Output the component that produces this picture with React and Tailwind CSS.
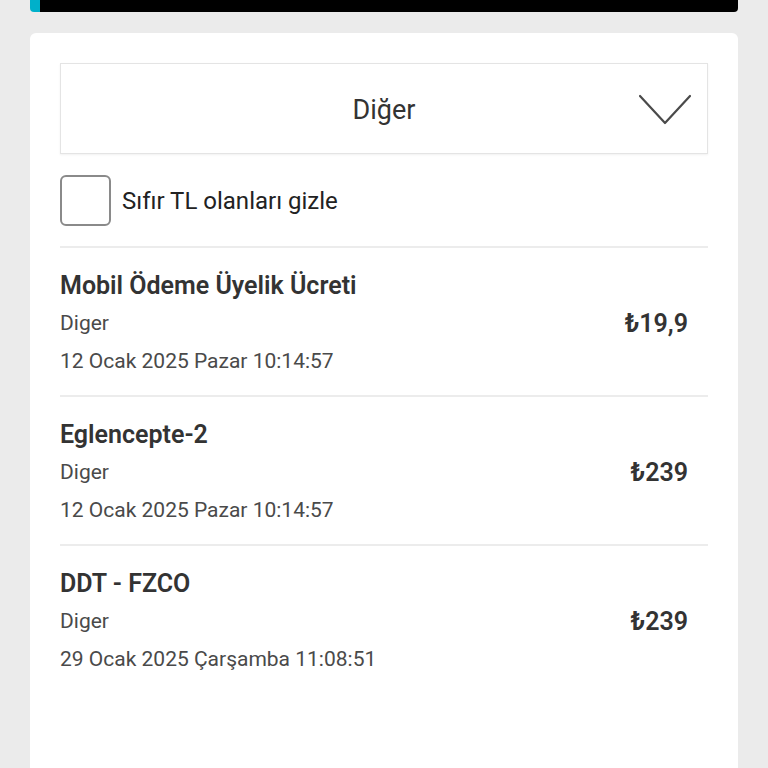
import React from 'react';

const items = [
  { title: 'Mobil Ödeme Üyelik Ücreti', category: 'Diger', date: '12 Ocak 2025 Pazar 10:14:57', amount: '19,9' },
  { title: 'Eglencepte-2', category: 'Diger', date: '12 Ocak 2025 Pazar 10:14:57', amount: '239' },
  { title: 'DDT - FZCO', category: 'Diger', date: '29 Ocak 2025 Çarşamba 11:08:51', amount: '239' },
];

const Chevron = () => (
  <svg width="54" height="34" viewBox="0 0 54 34" fill="none">
    <path d="M2 3 L27 30 L52 3" stroke="#4a4a4a" strokeWidth="2.2" strokeLinecap="round" strokeLinejoin="round" />
  </svg>
);

const App = () => {
  return (
    <div className="min-h-[768px] h-[768px] overflow-hidden bg-[#ebebeb] px-[30px] text-[#333]" style={{ fontFamily: 'Roboto, "Noto Sans", sans-serif' }}>
      {/* top bar */}
      <div className="flex h-[12px] overflow-hidden rounded-b-[4px]">
        <div className="w-[10px] bg-[#00b0ca]" />
        <div className="flex-1 bg-black" />
      </div>

      <div className="mt-[21px] h-[800px] rounded-t-[6px] bg-white px-[30px] pt-[30px]">
        {/* dropdown */}
        <div className="relative flex h-[91px] items-center justify-center border border-[#e4e4e4] pt-[3px] shadow-[0_1px_2px_rgba(0,0,0,0.06)]">
          <span className="text-[27px] text-[#333]">Diğer</span>
          <div className="absolute right-[15px] top-[29px]">
            <Chevron />
          </div>
        </div>

        {/* checkbox */}
        <label className="mt-[21px] flex items-center gap-[11px]">
          <span className="h-[51px] w-[51px] rounded-[6px] border-2 border-[#8a8a8a]" />
          <span className="text-[24px] text-[#222]">Sıfır TL olanları gizle</span>
        </label>

        {/* list */}
        <div className="mt-[20px] border-t-2 border-[#ececec]">
          {items.map((item, index) => (
            <div key={index} className={`flex items-center pt-[20px] pb-[15px] ${index < items.length - 1 ? 'border-b-2 border-[#ececec]' : ''}`}>
              <div className="flex flex-1 flex-col">
                <span className="text-[25px] font-semibold leading-[36px] text-[#333]">{item.title}</span>
                <span className="text-[21px] leading-[38px] text-[#4a4a4a]">{item.category}</span>
                <span className="text-[21px] leading-[38px] text-[#4a4a4a]">{item.date}</span>
              </div>
              <span className="pr-[20px] text-[25px] font-semibold text-[#333]">₺{item.amount}</span>
            </div>
          ))}
        </div>
      </div>
    </div>
  );
};

export default App;
